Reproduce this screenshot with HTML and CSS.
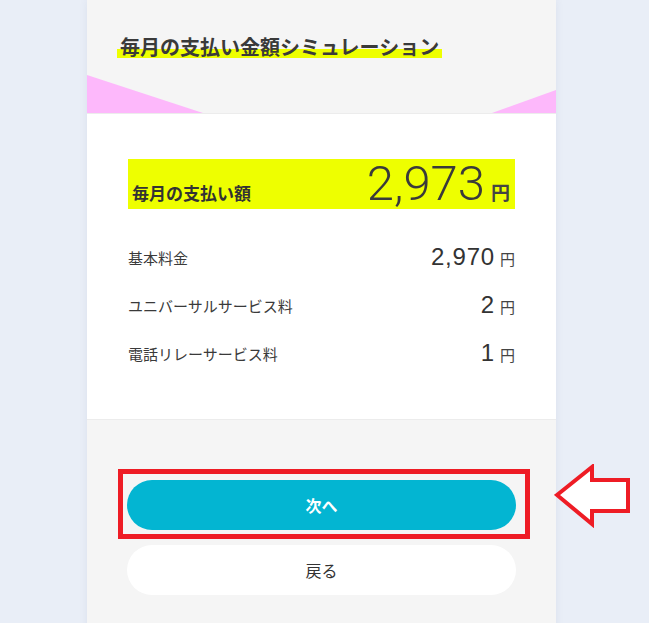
FILE: index.html
```html
<!DOCTYPE html>
<html lang="ja">
<head>
<meta charset="utf-8">
<title>毎月の支払い金額シミュレーション</title>
<link rel="stylesheet" href="styles.css">
</head>
<body>
<div class="card">
  <header class="head">
    <h1 class="title"><span class="mark">毎月の支払い金額シミュレーション</span></h1>
    <svg class="deco" width="469" height="38" viewBox="0 0 469 38" preserveAspectRatio="none">
      <polygon points="0,0 116,38 0,38" fill="#fdb8fb"/>
      <polygon points="469,15 469,38 405,38" fill="#fdb8fb"/>
    </svg>
  </header>
  <section class="body">
    <div class="total">
      <span class="total-label">毎月の支払い額</span>
      <span class="total-value"><span class="big">2,973</span><span class="yen-b">円</span></span>
    </div>
    <ul class="rows">
      <li class="row"><span class="row-label">基本料金</span><span class="row-value"><span class="num">2,970</span><span class="yen">円</span></span></li>
      <li class="row"><span class="row-label">ユニバーサルサービス料</span><span class="row-value"><span class="num">2</span><span class="yen">円</span></span></li>
      <li class="row"><span class="row-label">電話リレーサービス料</span><span class="row-value"><span class="num">1</span><span class="yen">円</span></span></li>
    </ul>
  </section>
  <footer class="foot">
    <div class="primary-wrap">
      <button class="btn btn-primary">次へ</button>
      <span class="highlight-box"></span>
    </div>
    <button class="btn btn-secondary">戻る</button>
  </footer>
</div>
<svg class="pointer" width="78" height="64" viewBox="0 0 78 64">
  <polygon points="3,31 38,3 38,16 74,16 74,47 38,47 38,60" fill="#ffffff" stroke="#ee1c25" stroke-width="4" stroke-linejoin="miter"/>
</svg>
</body>
</html>
```
FILE: styles.css
```css
* { box-sizing: border-box; }
html, body { margin: 0; padding: 0; }
body {
  background: #e9eef7;
  font-family: "Noto Sans CJK JP", "Noto Sans", sans-serif;
  color: #333;
  min-height: 623px;
  overflow: hidden;
  position: relative;
}
.card {
  width: 469px;
  margin-left: 87px;
  background: #f5f5f5;
  box-shadow: 0 0 8px rgba(60, 80, 120, 0.08);
  min-height: 623px;
}
.head {
  padding-top: 31px;
  display: flex;
  flex-direction: column;
}
.title {
  margin: 0 0 13px 30px;
  font-size: 20px;
  line-height: 31px;
  font-weight: 700;
  color: #3a3a3a;
}
.mark {
  padding: 0 3px 0 3px;
  background: linear-gradient(to bottom, transparent 17px, #eeff00 17px, #eeff00 26px, transparent 26px);
}
.deco { display: block; }
.body {
  background: #fff;
  border-top: 1px solid #ececec;
  border-bottom: 1px solid #ececec;
  padding: 45px 41px 42px;
}
.total {
  background: #eeff00;
  height: 50px;
  display: flex;
  justify-content: space-between;
  align-items: baseline;
  padding: 0 5px 0 4px;
}
.total-label {
  font-size: 17px;
  font-weight: 700;
  color: #333;
}
.total-value { display: flex; align-items: baseline; }
.big {
  font-family: Roboto, "Liberation Sans", sans-serif;
  font-weight: 300;
  font-size: 49px;
  line-height: 50px;
  color: #3a3a3a;
}
.yen-b {
  font-size: 19px;
  font-weight: 700;
  margin-left: 6px;
  color: #444;
}
.rows { list-style: none; margin: 24px 0 0; padding: 0; }
.row {
  height: 48px;
  display: flex;
  justify-content: space-between;
  align-items: center;
}
.row-label { font-size: 15px; color: #3a3a3a; }
.row-value { display: flex; align-items: baseline; }
.num {
  font-family: "Liberation Sans", Arial, sans-serif;
  font-size: 24px;
  letter-spacing: 0.8px;
  color: #333;
}
.yen { font-size: 15px; margin-left: 5px; color: #444; }
.foot {
  padding: 60px 40px 40px;
  display: flex;
  flex-direction: column;
  gap: 15px;
}
.primary-wrap { position: relative; }
.btn {
  display: block;
  width: 100%;
  height: 50px;
  border: 0;
  border-radius: 25px;
  font-family: "Noto Sans CJK JP", "Noto Sans", sans-serif;
  font-size: 16px;
  cursor: pointer;
}
.btn-primary {
  background: #03b5d2;
  color: #fff;
  font-weight: 700;
}
.btn-secondary {
  background: #fff;
  color: #333;
}
.highlight-box {
  position: absolute;
  top: -11px;
  left: -9px;
  right: -14px;
  bottom: -9px;
  border: 5px solid #ee1c25;
  pointer-events: none;
}
.pointer {
  position: absolute;
  left: 554px;
  top: 464px;
}
```
